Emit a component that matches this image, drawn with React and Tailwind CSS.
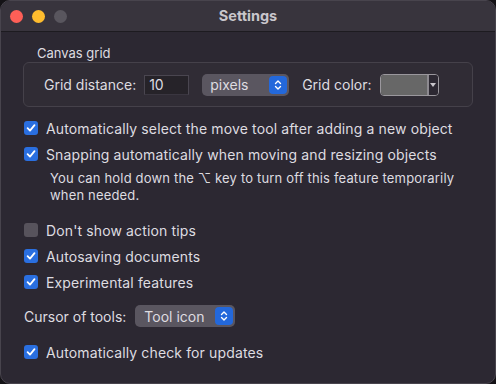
import React from "react";

const font = { fontFamily: 'Inter, "Liberation Sans", Arial, sans-serif' };

function Check({ checked }) {
  return checked ? (
    <div className="w-[14px] h-[14px] rounded-[3px] bg-[#2a6fe0] flex items-center justify-center shrink-0">
      <svg width="10" height="10" viewBox="0 0 10 10">
        <path d="M1.6 5.2 L4 7.6 L8.5 2.2" stroke="white" strokeWidth="1.8" fill="none" strokeLinecap="round" strokeLinejoin="round" />
      </svg>
    </div>
  ) : (
    <div className="w-[14px] h-[14px] rounded-[3px] bg-[#57535c] shrink-0" />
  );
}

function Stepper() {
  return (
    <div className="w-[18px] h-[18px] rounded-[4px] bg-[#2368db] flex items-center justify-center">
      <svg width="8" height="12" viewBox="0 0 8 12">
        <path d="M1.5 4.5 L4 2 L6.5 4.5 M1.5 7.5 L4 10 L6.5 7.5" stroke="white" strokeWidth="1.4" fill="none" strokeLinecap="round" strokeLinejoin="round" />
      </svg>
    </div>
  );
}

function Row({ checked, children, className = "" }) {
  return (
    <div className={"flex items-center h-[26px] pl-[23px] gap-[8px] " + className}>
      <Check checked={checked} />
      <span className="text-[14px] tracking-[0.13px] text-[#dedce0]">{children}</span>
    </div>
  );
}

export default function App() {
  return (
    <div className="w-[496px] h-[384px] bg-[#141216]" style={font}>
      <div className="w-[496px] h-[384px] rounded-[10px] overflow-hidden bg-[#2c2832] border border-[#48444d] flex flex-col">
        <div className="h-[31px] shrink-0 bg-[#38343d] border-b border-[#1d1b20] flex items-center relative">
          <div className="flex items-center gap-[9px] pl-[9px]">
            <div className="w-[13px] h-[13px] rounded-full bg-[#fe5f57]" />
            <div className="w-[13px] h-[13px] rounded-full bg-[#febc2e]" />
            <div className="w-[13px] h-[13px] rounded-full bg-[#59565e]" />
          </div>
          <div className="absolute inset-0 flex items-center justify-center text-[14.5px] font-bold text-[#c9c6cc]">
            Settings
          </div>
        </div>
        <div className="flex flex-col pt-[12px]">
          <div className="h-[18px] leading-[18px] pl-[36px] text-[13px] text-[#dedce0]">Canvas grid</div>
          <div className="mx-[22px] h-[45px] rounded-[6px] border border-[#45414a] bg-[#302c35] flex items-center pl-[20px] text-[14px] text-[#dedce0]">
            <span>Grid distance:</span>
            <div className="ml-[8px] w-[45px] h-[20px] bg-[#262329] border border-[#4a4650] border-b-[#3a3640] flex items-center pl-[4px] text-[14px]">10</div>
            <div className="ml-[13px] w-[87px] h-[22px] rounded-[5px] bg-[#5a5660] flex items-center justify-between pl-[8px] pr-[2px]">
              <span>pixels</span>
              <Stepper />
            </div>
            <span className="ml-[13px]">Grid color:</span>
            <div className="ml-[8px] w-[59px] h-[22px] rounded-[4px] border border-[#9a979d] flex overflow-hidden">
              <div className="flex-1 bg-[#676767] border-r-2 border-[#8d8a90]" />
              <div className="w-[9px] flex items-center justify-center bg-[#2c2832]">
                <svg width="6" height="4" viewBox="0 0 6 4"><path d="M0 0 L6 0 L3 4 Z" fill="#c9c6cc" /></svg>
              </div>
            </div>
          </div>
          <Row checked className="mt-[8px]">Automatically select the move tool after adding a new object</Row>
          <Row checked>Snapping automatically when moving and resizing objects</Row>
          <div className="pl-[49px] pr-[4px] mt-[3px] text-[13px] tracking-[0.17px] leading-[17px] text-[#dedce0]">
            You can hold down the ⌥ key to turn off this feature temporarily<br />when needed.
          </div>
          <Row checked={false} className="mt-[13px]">Don't show action tips</Row>
          <Row checked>Autosaving documents</Row>
          <Row checked>Experimental features</Row>
          <div className="flex items-center h-[26px] pl-[23px] mt-[8px] text-[14px] text-[#dedce0]">
            <span>Cursor of tools:</span>
            <div className="ml-[9px] w-[100px] h-[22px] rounded-[5px] bg-[#5a5660] flex items-center justify-between pl-[9px] pr-[2px]">
              <span>Tool icon</span>
              <Stepper />
            </div>
          </div>
          <Row checked className="mt-[10px]">Automatically check for updates</Row>
        </div>
      </div>
    </div>
  );
}
